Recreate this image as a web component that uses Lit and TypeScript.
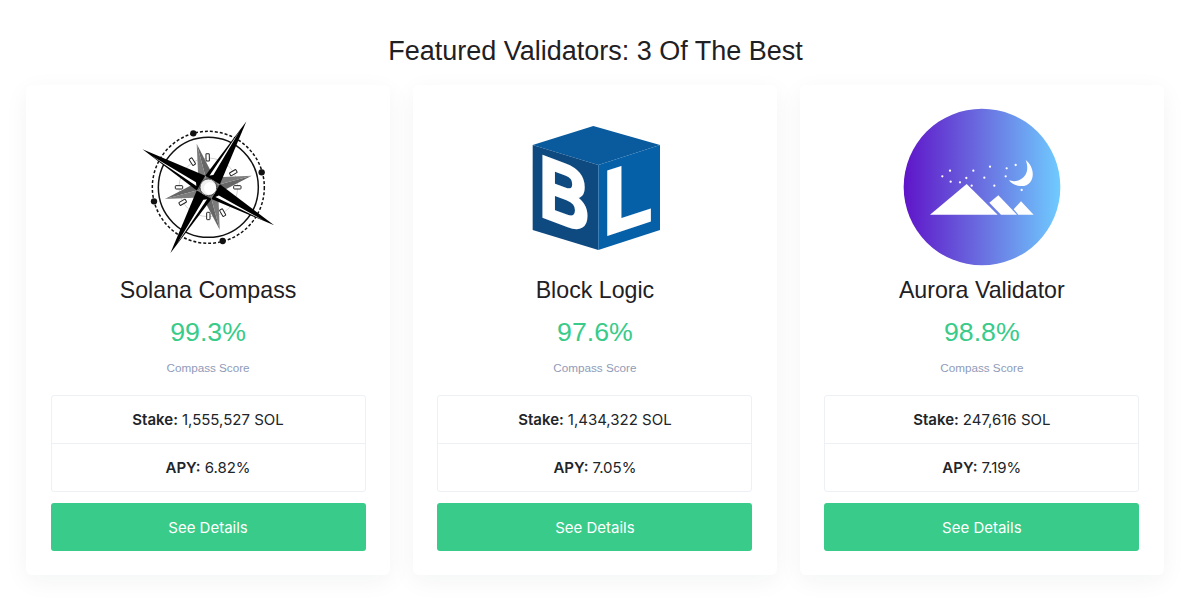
import { LitElement, html, css, svg } from "lit";
import { customElement } from "lit/decorators.js";

const C = { x: 235, y: 232 };
const pt = (a: number, r: number) =>
  `${(C.x + Math.cos((a * Math.PI) / 180) * r).toFixed(1)},${(C.y + Math.sin((a * Math.PI) / 180) * r).toFixed(1)}`;

// angle of the arm and the side on which its white sliver lies
const ARMS: [number, number][] = [[-60, -1], [30, 1], [120, -1], [210, -1]];
const GRAY: [number, number][] = [[-105, 135], [-15, 135], [75, 132], [165, 135]];
const LINKS = [[187, 155], [233, 142], [310, 188], [322, 232], [278, 308], [235, 318], [158, 277], [147, 232]];

const compass = svg`
  <circle cx="235" cy="232" r="168" fill="none" stroke="#111" stroke-width="4.5" stroke-dasharray="9 6"/>
  <circle cx="235" cy="232" r="150" fill="#fff" stroke="#111" stroke-width="4.5"/>
  <circle cx="235" cy="232" r="88" fill="none" stroke="#bdbdbd" stroke-width="2"/>
  ${[[190, 70], [395, 187], [72, 274], [278, 393]].map(([x, y]) => svg`<circle cx=${x} cy=${y} r="9.5" fill="#111"/>`)}
  ${LINKS.map(([x, y]) => {
    const a = (Math.atan2(y - C.y, x - C.x) * 180) / Math.PI;
    return svg`<rect x="-5" y="-11" width="10" height="22" rx="2" fill="#fff" stroke="#222" stroke-width="3"
      transform="translate(${x} ${y}) rotate(${a + 90})"/>`;
  })}
  ${GRAY.map(([a, r]) => svg`
    <polygon points="${pt(a, r)} ${pt(a + 34, 40)} ${pt(a, 10)}" fill="#666"/>
    <polygon points="${pt(a, r)} ${pt(a - 34, 40)} ${pt(a, 10)}" fill="#7c7c7c"/>`)}
  ${ARMS.map(([a, s]) => svg`
    <polygon points="${pt(a, 228)} ${pt(a + 45, 36)} ${pt(a - 45, 36)}" fill="#000"/>
    <polygon points="${pt(a + s * 0.9, 195)} ${pt(a + s * 24, 36)} ${pt(a + s * 8, 40)}" fill="#fff"/>`)}
  <circle cx="235" cy="232" r="25" fill="#efefef" stroke="#222" stroke-width="2"/>
  <circle cx="240" cy="235" r="18" fill="#fff"/>
`;

const cube = svg`
  <polygon points="220,33 420,90 235,150 38,90" fill="#0a5b9e"/>
  <polygon points="38,90 235,150 235,405 38,345" fill="#0e4a80"/>
  <polygon points="235,150 420,90 420,345 235,405" fill="#0560a8"/>
  <text class="cube-l" transform="matrix(0.8 0.3 0 1 57 300)" font-size="262">B</text>
  <text class="cube-l" transform="matrix(0.88 -0.29 0 1 250 362)" font-size="272">L</text>
`;

const STARS = [[165, 212], [142, 229], [167, 245], [195, 247], [214, 234], [235, 212], [230, 257], [268, 233], [285, 200], [298, 257], [335, 205], [332, 229], [362, 195], [380, 270]];

const aurora = svg`
  <defs>
    <linearGradient id="au" x1="0" x2="1" y1="0" y2="0">
      <stop offset="0" stop-color="#5f14c9"/>
      <stop offset="0.5" stop-color="#6a6fe0"/>
      <stop offset="1" stop-color="#6fcbff"/>
    </linearGradient>
  </defs>
  <circle cx="261" cy="261" r="235" fill="url(#au)"/>
  <polygon points="105,344 215,252 308,344" fill="#fff"/>
  <polygon points="283,308 310,286 366,344 318,344" fill="#fff"/>
  <polygon points="356,328 378,304 416,344 370,344" fill="#fff"/>
  <path d="M392 180 C425 205 420 262 375 258 C358 256 348 250 342 241 C375 252 410 225 392 180Z" fill="#fff"/>
  ${STARS.map(([x, y]) => svg`<circle cx=${x} cy=${y} r="3.4" fill="#fff"/>`)}
`;

const VALIDATORS = [
  { name: "Solana Compass", score: "99.3%", stake: "1,555,527", apy: "6.82%", logo: html`<svg class="logo compass" width="160" height="150" viewBox="0 0 480 450">${compass}</svg>` },
  { name: "Block Logic", score: "97.6%", stake: "1,434,322", apy: "7.05%", logo: html`<svg class="logo cube" width="150" height="145" viewBox="0 0 450 435">${cube}</svg>` },
  { name: "Aurora Validator", score: "98.8%", stake: "247,616", apy: "7.19%", logo: html`<svg class="logo aurora" width="175" height="170" viewBox="0 0 525 510">${aurora}</svg>` },
];

@customElement("app-root")
export class AppRoot extends LitElement {
  static styles = css`
    :host { display: block; width: 1200px; height: 604px; background: #fff; overflow: hidden; font-family: "Liberation Sans", Arial, sans-serif; color: #1a1a1a; }
    h1 { margin: 0; padding: 36px 9px 0 0; height: 49px; line-height: 30px; font-size: 27px; font-weight: 400; text-align: center; color: #1f2023; }
    .cards { display: flex; gap: 22.9px; padding: 0 0 0 25.9px; }
    .card { flex: 0 0 364px; height: 490px; box-sizing: border-box; padding: 22px 24.35px 0 24.65px; background: #fff; border-radius: 6px; box-shadow: 0 6px 24px rgba(20, 30, 60, 0.05); text-align: center; }
    .logo-box { height: 156px; display: flex; align-items: center; justify-content: center; }
    .logo { display: block; }
    .compass { margin-left: 4px; }
    .cube { margin-top: 5px; }
    .aurora { margin-left: 2px; }
    .name { margin-top: 11px; font-size: 23.2px; line-height: 32px; color: #1f2023; }
    .score { margin-top: 10px; font-size: 26.7px; line-height: 32px; color: #38cb89; }
    .label { margin-top: 11px; font-size: 11.7px; line-height: 18px; color: #8f9bb8; }
    .table { margin-top: 18px; border: 1px solid #edf0f5; border-radius: 3px; font-family: Inter, "Liberation Sans", sans-serif; font-size: 15px; }
    .row { height: 47px; display: flex; align-items: center; justify-content: center; gap: 4px; color: #212529; }
    .row + .row { border-top: 1px solid #edf0f5; }
    .row b { font-weight: 600; }
    .btn { margin-top: 11px; height: 48px; display: flex; align-items: center; justify-content: center; background: #38cb89; border-radius: 3px; color: #fff; font-family: Inter, "Liberation Sans", sans-serif; font-size: 15px; }
    svg text.cube-l { font-family: "Liberation Sans", Arial, sans-serif; font-weight: 700; fill: #fff; stroke: #fff; stroke-width: 9px; }
  `;

  render() {
    return html`
      <h1>Featured Validators: 3 Of The Best</h1>
      <div class="cards">
        ${VALIDATORS.map(
          (v) => html`
            <div class="card">
              <div class="logo-box">${v.logo}</div>
              <div class="name">${v.name}</div>
              <div class="score">${v.score}</div>
              <div class="label">Compass Score</div>
              <div class="table">
                <div class="row"><b>Stake:</b> <span>${v.stake} SOL</span></div>
                <div class="row"><b>APY:</b> <span>${v.apy}</span></div>
              </div>
              <div class="btn">See Details</div>
            </div>
          `,
        )}
      </div>
    `;
  }
}
